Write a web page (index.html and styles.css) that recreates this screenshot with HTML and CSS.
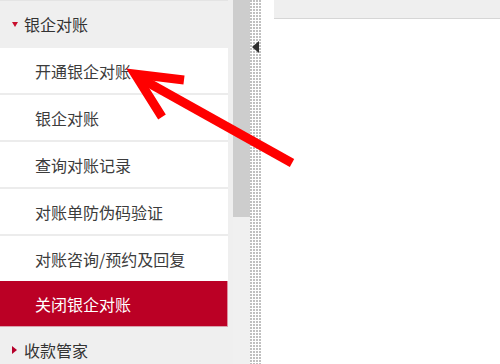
FILE: index.html
```html
<!DOCTYPE html>
<html>
<head>
<meta charset="utf-8">
<link rel="stylesheet" href="styles.css">
</head>
<body>
<div class="page">
  <div class="sidebar">
    <div class="group open"><span class="tri-down"></span>银企对账</div>
    <div class="item">开通银企对账</div>
    <div class="item">银企对账</div>
    <div class="item">查询对账记录</div>
    <div class="item">对账单防伪码验证</div>
    <div class="item">对账咨询/预约及回复</div>
    <div class="item active">关闭银企对账</div>
    <div class="group"><span class="tri-right"></span>收款管家</div>
  </div>
  <div class="scroll"><div class="thumb"></div></div>
  <div class="splitter"><span class="collapse"></span></div>
  <div class="main"><div class="topbar"></div></div>
</div>
<svg class="arrow" width="500" height="364" viewBox="0 0 500 364">
  <g stroke="#ff0000" stroke-width="9" stroke-linecap="butt" fill="none">
    <line x1="292" y1="163" x2="138" y2="77"/>
  </g>
  <g stroke="#ff0000" stroke-width="9" stroke-linecap="butt" stroke-linejoin="miter" fill="none">
    <polyline points="184,80 135,74 162,117"/>
  </g>
</svg>
</body>
</html>
```
FILE: styles.css
```css
html, body {
  margin: 0;
  padding: 0;
  background: #ffffff;
}
.page {
  display: flex;
  width: 500px;
  height: 364px;
  overflow: hidden;
  font-family: "Noto Sans CJK SC", "Noto Sans", sans-serif;
}
.sidebar {
  width: 228px;
  flex: none;
  background: #efefef;
  display: flex;
  flex-direction: column;
  border-right: 5px solid #efefef;
}
.group {
  height: 48px;
  flex: none;
  display: flex;
  align-items: center;
  padding-left: 12px;
  padding-bottom: 2px;
  font-size: 16px;
  color: #333333;
  border-top: 1px solid #e4e4e4;
  box-sizing: border-box;
}
.tri-down {
  width: 0;
  height: 0;
  border-left: 3.5px solid transparent;
  border-right: 3.5px solid transparent;
  border-top: 5px solid #c8102e;
  margin-right: 6px;
  margin-top: 1px;
}
.tri-right {
  width: 0;
  height: 0;
  border-top: 4px solid transparent;
  border-bottom: 4px solid transparent;
  border-left: 5px solid #b5002a;
  margin-right: 7px;
}
.group:last-child {
  border-top: none;
  height: 40px;
  padding-top: 6px;
  padding-bottom: 0;
}
.item {
  height: 45px;
  flex: none;
  display: flex;
  align-items: center;
  padding-left: 35px;
  background: #ffffff;
  border-bottom: 2px solid #ececec;
  font-size: 16px;
  color: #3c3c3c;
}
.item.active {
  background: #bb0025;
  color: #ffffff;
  margin-top: -2px;
  height: 45px;
  border-bottom: 1px solid #d9a1ad;
  box-shadow: inset -1px 0 0 #dc8fa0;
}
.scroll {
  width: 17px;
  flex: none;
  background: #f0f0f0;
}
.thumb {
  height: 217px;
  background: #cdcdcd;
}
.splitter {
  position: relative;
  width: 12px;
  flex: none;
  background-image:
    linear-gradient(90deg, transparent 2px, #ffffff 2px),
    linear-gradient(transparent 2px, #ffffff 2px);
  background-size: 3px 3px;
  background-color: #c0c0c0;
}
.collapse {
  position: absolute;
  left: 2px;
  top: 41px;
  width: 0;
  height: 0;
  border-top: 6px solid transparent;
  border-bottom: 6px solid transparent;
  border-right: 7px solid #2e2e2e;
}
.main {
  flex: 1;
  padding-left: 12px;
  background: #ffffff;
}
.topbar {
  height: 18px;
  background: #efefef;
  border-bottom: 1px solid #d6d6d6;
}
.arrow {
  position: absolute;
  left: 0;
  top: 0;
  pointer-events: none;
}
```
